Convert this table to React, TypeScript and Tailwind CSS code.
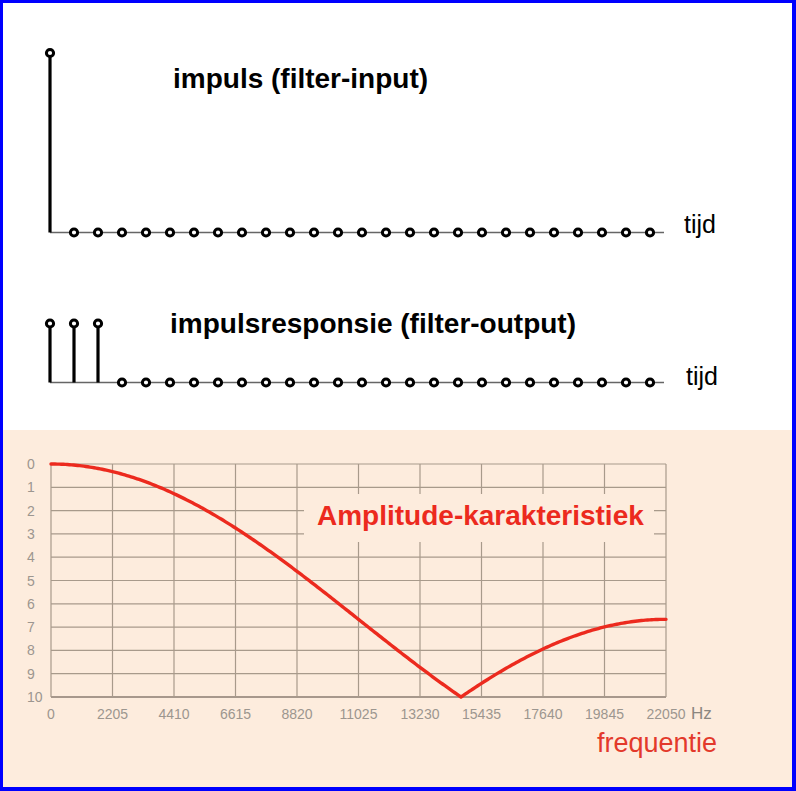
import React from 'react';

const FONT = '"Liberation Sans", Arial, sans-serif';
const PEACH = '#fdecdd';
const GRID = '#a89a8b';
const LABEL = '#9c968f';
const RED = '#ec2a1e';

// stem plot: page coordinates, shifted by the border
const StemPlot: React.FC<{ stems: number; stemTop: number; base: number; tijdX: number; tijdY: number }> = ({
  stems,
  stemTop,
  base,
  tijdX,
  tijdY,
}) => {
  const xs = Array.from({ length: 26 }, (_, i) => 50 + i * 24);
  return (
    <g>
      <line x1={50} y1={base} x2={664} y2={base} stroke="#666" strokeWidth={1.3} />
      {xs.map((x, i) =>
        i < stems ? (
          <g key={i}>
            <line x1={x} y1={stemTop} x2={x} y2={base} stroke="#000" strokeWidth={3.2} />
            <circle cx={x} cy={stemTop} r={3.6} fill="#fff" stroke="#000" strokeWidth={3} />
          </g>
        ) : (
          <circle key={i} cx={x} cy={base} r={3.6} fill="#fff" stroke="#000" strokeWidth={3} />
        )
      )}
      <text x={tijdX} y={tijdY} fontFamily={FONT} fontSize={25} fill="#000">
        tijd
      </text>
    </g>
  );
};

const Chart: React.FC = () => {
  const left = 51;
  const top = 464;
  const colW = 61.5;
  const rowH = 23.3;
  const right = left + colW * 10;
  const bottom = top + rowH * 10;

  const pts: number[][] = [];
  for (let i = 0; i <= 300; i++) {
    const f = (22050 * i) / 300;
    const h = Math.abs(1 + 2 * Math.cos((Math.PI * f) / 22050));
    pts.push([left + (615 * f) / 22050, top + rowH * 10 * (1 - h / 3)]);
  }
  // exact notch at 14700 Hz
  pts.push([left + (615 * 14700) / 22050, bottom]);
  const line = pts
    .sort((a, b) => a[0] - b[0])
    .map((p) => `${p[0].toFixed(2)},${p[1].toFixed(2)}`)
    .join(' ');

  return (
    <g>
      {Array.from({ length: 11 }, (_, j) => (
        <line
          key={'h' + j}
          x1={left}
          y1={top + j * rowH}
          x2={right}
          y2={top + j * rowH}
          stroke={j === 10 ? '#8a7d70' : GRID}
          strokeWidth={j === 10 ? 1.6 : 1.2}
        />
      ))}
      {Array.from({ length: 11 }, (_, i) => (
        <line
          key={'v' + i}
          x1={left + i * colW}
          y1={top}
          x2={left + i * colW}
          y2={bottom}
          stroke={GRID}
          strokeWidth={1.2}
        />
      ))}
      {Array.from({ length: 11 }, (_, j) => (
        <text key={'yl' + j} x={27} y={top + j * rowH + 5} fontFamily={FONT} fontSize={14} fill={LABEL}>
          {j}
        </text>
      ))}
      {Array.from({ length: 11 }, (_, i) => (
        <text
          key={'xl' + i}
          x={left + i * colW}
          y={719}
          textAnchor="middle"
          fontFamily={FONT}
          fontSize={14}
          fill={LABEL}
        >
          {i * 2205}
        </text>
      ))}
      <text x={691} y={719} fontFamily={FONT} fontSize={17} fill="#8b8680">
        Hz
      </text>

      <rect x={304} y={494} width={350} height={48} fill={PEACH} />
      <text x={317} y={525} fontFamily={FONT} fontSize={28} fontWeight="bold" fill={RED}>
        Amplitude-karakteristiek
      </text>

      <polyline points={line} fill="none" stroke={RED} strokeWidth={3.4} strokeLinejoin="round" strokeLinecap="round" />

      <text x={597} y={752} fontFamily={FONT} fontSize={27} fill="#e3392b">
        frequentie
      </text>
    </g>
  );
};

export default function App() {
  return (
    <div className="w-[796px] h-[791px] flex flex-col border-[#0000ff] border-l-[3px] border-t-[3px] border-r-4 border-b-4 box-border">
      <div className="h-[427px] bg-white">
        <svg width="789" height="427" viewBox="3 3 789 427" className="block">
          <text x={173} y={88} fontFamily={FONT} fontSize={28} fontWeight="bold" fill="#000">
            impuls (filter-input)
          </text>
          <StemPlot stems={1} stemTop={53} base={232.5} tijdX={684} tijdY={233} />

          <text x={170} y={333} fontFamily={FONT} fontSize={28} fontWeight="bold" fill="#000">
            impulsresponsie (filter-output)
          </text>
          <StemPlot stems={3} stemTop={323.5} base={382.5} tijdX={686} tijdY={385} />
        </svg>
      </div>
      <div className="flex-1 bg-[#fdecdd]">
        <svg width="789" height="357" viewBox="3 430 789 357" className="block">
          <Chart />
        </svg>
      </div>
    </div>
  );
}
